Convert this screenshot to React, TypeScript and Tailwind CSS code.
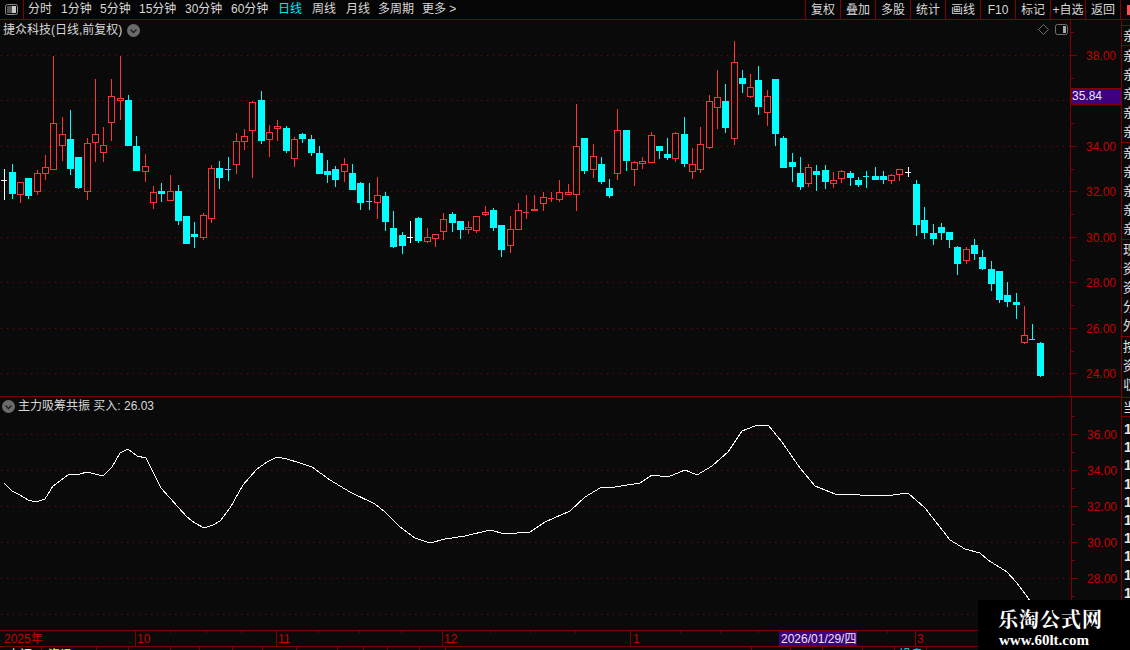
import React from 'react'

type Candle = [number, number, number, number, number, 'r' | 'c' | 'w']

// x, high, body top, body bottom, low, kind
const candles: Candle[] = [
  [4, 169, 180, 180, 200, 'w'], [12, 164, 172, 194, 199, 'c'], [20, 182, 182, 195, 203, 'r'], [28, 178, 178, 196, 199, 'c'],
  [37, 170, 173, 192, 195, 'r'], [45, 155, 167, 174, 180, 'r'], [53, 56, 123, 170, 170, 'r'], [62, 117, 134, 146, 161, 'r'],
  [70, 110, 139, 169, 175, 'c'], [78, 157, 157, 188, 189, 'c'], [87, 138, 143, 192, 200, 'r'], [95, 79, 134, 143, 162, 'r'],
  [103, 127, 145, 153, 162, 'r'], [111, 79, 96, 123, 141, 'r'], [120, 56, 98, 101, 120, 'r'], [128, 95, 100, 146, 146, 'c'],
  [136, 136, 146, 171, 171, 'c'], [145, 154, 166, 172, 182, 'r'], [153, 186, 192, 203, 209, 'r'], [161, 183, 191, 194, 202, 'c'],
  [170, 175, 191, 201, 201, 'r'], [178, 185, 191, 221, 225, 'c'], [186, 216, 216, 244, 244, 'c'], [194, 222, 234, 237, 248, 'c'],
  [203, 213, 215, 238, 240, 'r'], [211, 165, 168, 219, 223, 'r'], [219, 161, 168, 178, 189, 'c'], [228, 157, 169, 169, 181, 'c'],
  [236, 133, 141, 165, 174, 'r'], [244, 129, 136, 142, 150, 'r'], [252, 101, 102, 131, 178, 'r'], [261, 91, 100, 141, 144, 'c'],
  [269, 125, 132, 140, 157, 'r'], [277, 120, 126, 129, 141, 'r'], [286, 126, 128, 151, 153, 'c'], [294, 137, 139, 159, 167, 'r'],
  [302, 133, 134, 139, 143, 'c'], [311, 135, 139, 153, 156, 'c'], [319, 146, 153, 174, 174, 'c'], [327, 160, 171, 175, 183, 'c'],
  [335, 166, 169, 180, 187, 'c'], [344, 158, 164, 172, 182, 'r'], [352, 164, 173, 190, 190, 'c'], [360, 182, 183, 203, 210, 'c'],
  [369, 183, 201, 201, 210, 'c'], [377, 177, 195, 203, 219, 'r'], [385, 192, 196, 222, 231, 'c'], [393, 211, 228, 247, 248, 'c'],
  [402, 232, 235, 246, 254, 'c'], [410, 221, 237, 237, 243, 'w'], [418, 217, 218, 241, 243, 'c'], [427, 228, 237, 242, 243, 'r'],
  [435, 234, 234, 239, 247, 'r'], [443, 213, 219, 232, 240, 'r'], [452, 212, 214, 223, 232, 'c'], [460, 221, 221, 230, 239, 'c'],
  [468, 221, 227, 230, 234, 'r'], [476, 216, 216, 231, 233, 'r'], [485, 206, 212, 215, 216, 'r'], [493, 208, 210, 228, 231, 'c'],
  [501, 225, 225, 250, 257, 'c'], [510, 216, 229, 246, 253, 'r'], [518, 203, 210, 230, 230, 'r'], [526, 195, 212, 212, 219, 'r'],
  [534, 195, 209, 211, 211, 'r'], [543, 192, 197, 204, 211, 'r'], [551, 192, 198, 198, 202, 'r'], [559, 180, 192, 200, 202, 'r'],
  [568, 184, 192, 195, 195, 'r'], [576, 104, 146, 195, 211, 'r'], [584, 138, 138, 171, 174, 'c'], [593, 144, 156, 170, 178, 'r'],
  [601, 157, 164, 182, 184, 'c'], [609, 179, 188, 196, 198, 'c'], [617, 109, 130, 174, 180, 'r'], [626, 130, 130, 161, 171, 'c'],
  [634, 161, 162, 170, 186, 'r'], [642, 157, 161, 164, 169, 'r'], [651, 132, 135, 163, 163, 'r'], [659, 146, 146, 151, 159, 'c'],
  [667, 138, 154, 158, 160, 'c'], [675, 132, 133, 159, 162, 'r'], [684, 117, 134, 164, 167, 'c'], [692, 148, 164, 172, 179, 'r'],
  [700, 127, 144, 170, 173, 'r'], [709, 95, 101, 148, 149, 'r'], [717, 70, 97, 108, 129, 'r'], [725, 84, 101, 128, 133, 'c'],
  [734, 41, 62, 139, 145, 'r'], [742, 70, 78, 84, 93, 'c'], [750, 74, 87, 97, 98, 'r'], [758, 66, 80, 107, 115, 'c'],
  [767, 90, 96, 113, 126, 'r'], [775, 79, 79, 134, 146, 'c'], [783, 136, 138, 168, 168, 'c'], [792, 153, 162, 167, 182, 'c'],
  [800, 157, 173, 187, 190, 'c'], [808, 164, 167, 184, 187, 'r'], [816, 165, 171, 175, 191, 'c'], [825, 165, 170, 182, 189, 'c'],
  [833, 172, 180, 184, 188, 'r'], [841, 170, 171, 179, 183, 'r'], [850, 171, 173, 178, 186, 'c'], [858, 177, 180, 185, 187, 'c'],
  [866, 171, 176, 176, 188, 'c'], [875, 167, 176, 180, 180, 'c'], [883, 171, 176, 180, 184, 'c'], [891, 174, 175, 181, 184, 'r'],
  [899, 169, 169, 175, 181, 'r'], [908, 167, 172, 172, 177, 'w'], [916, 180, 184, 225, 236, 'c'], [924, 207, 220, 233, 239, 'c'],
  [933, 224, 233, 239, 245, 'c'], [941, 223, 227, 233, 240, 'c'], [949, 232, 232, 240, 248, 'c'], [957, 246, 247, 264, 275, 'c'],
  [966, 247, 249, 261, 264, 'r'], [974, 239, 245, 254, 260, 'c'], [982, 250, 257, 269, 270, 'c'], [991, 261, 269, 284, 291, 'c'],
  [999, 271, 271, 300, 303, 'c'], [1007, 282, 295, 302, 307, 'c'], [1016, 293, 302, 305, 319, 'c'], [1024, 306, 335, 343, 344, 'r'],
  [1032, 324, 339, 339, 340, 'c'], [1040, 342, 343, 376, 377, 'c'],
]

const linePoints = [
  [4, 483], [12, 491], [20, 495], [28, 500], [36, 502], [45, 499], [53, 486], [60, 481], [68, 475], [80, 474], [87, 472], [95, 474],
  [103, 476], [112, 467], [120, 453], [128, 449], [137, 456], [146, 458], [161, 488], [178, 507], [187, 517], [195, 523], [204, 528],
  [213, 525], [220, 521], [230, 508], [243, 485], [257, 469], [267, 462], [277, 457], [287, 459], [300, 463], [312, 467], [330, 480],
  [350, 492], [375, 504], [385, 512], [400, 527], [415, 538], [430, 543], [445, 539], [465, 536], [490, 530], [505, 534], [530, 532],
  [545, 522], [570, 511], [585, 497], [600, 488], [615, 487], [640, 483], [652, 475], [668, 477], [685, 470], [697, 475], [712, 466],
  [728, 452], [742, 431], [755, 426], [768, 425], [782, 442], [800, 468], [815, 486], [835, 494], [860, 495], [885, 496], [908, 493],
  [925, 508], [950, 540], [965, 549], [980, 553], [988, 560], [1007, 572], [1017, 583], [1028, 598], [1040, 616],
]

const leftTabs = [
  { label: '分时', cls: 'w-[33px]' },
  { label: '1分钟', cls: 'w-[39px]' },
  { label: '5分钟', cls: 'w-[39px]' },
  { label: '15分钟', cls: 'w-[46px]' },
  { label: '30分钟', cls: 'w-[46px]' },
  { label: '60分钟', cls: 'w-[47px]' },
  { label: '日线', cls: 'w-[34px] text-[#00e6ff]' },
  { label: '周线', cls: 'w-[34px]' },
  { label: '月线', cls: 'w-[32px]' },
  { label: '多周期', cls: 'w-[44px]' },
  { label: '更多 >', cls: 'w-[44px]' },
]

const rightTabs = ['复权', '叠加', '多股', '统计', '画线', 'F10', '标记', '+自选', '返回']

const upperGrid = [55, 100, 146, 191, 237, 282, 328, 373]
const upperLabels = [[55, '38.00'], [146, '34.00'], [191, '32.00'], [237, '30.00'], [282, '28.00'], [328, '26.00'], [373, '24.00']] as const
const upperMinor = [32, 78, 123, 169, 214, 260, 305, 351]
const lowerGrid = [434, 470, 506, 542, 578, 614]
const lowerLabels = [[434, '36.00'], [470, '34.00'], [506, '32.00'], [542, '30.00'], [578, '28.00']] as const
const lowerMinor = [416, 452, 488, 524, 560, 596]

const sideGroups = [
  { chars: ['亲'], cls: 'h-[20px]' },
  { chars: ['亲', '亲', '亲', '亲', '亲'], cls: 'h-[97px]' },
  { chars: ['亲', '亲', '亲', '亲', '亲'], cls: 'h-[97px]' },
  { chars: ['现', '资', '资', '分', '外'], cls: 'h-[97px]' },
  { chars: ['按', '资', '収'], cls: 'h-[61px]' },
  { chars: ['当'], cls: 'h-[19px]' },
]

const bottomCells = [
  { w: 'w-[42px]', text: '上证', color: 'text-white', pl: 'pl-[8px]' },
  { w: 'w-[55px]', text: '资讯', color: 'text-[#ffff00]', pl: 'pl-[6px]' },
  { w: 'w-[32px]', text: '', color: 'text-white', pl: 'pl-[8px]' },
  { w: 'w-[42px]', text: '', color: 'text-white', pl: 'pl-0' },
  { w: 'w-[29px]', text: '', color: 'text-white', pl: 'pl-0' },
  { w: 'w-[33px]', text: '', color: 'text-white', pl: 'pl-0' },
  { w: 'w-[30px]', text: '', color: 'text-white', pl: 'pl-0' },
  { w: 'w-[34px]', text: '', color: 'text-white', pl: 'pl-0' },
  { w: 'w-[41px]', text: '', color: 'text-white', pl: 'pl-0' },
  { w: 'w-[26px]', text: '', color: 'text-white', pl: 'pl-0' },
  { w: 'w-[24px]', text: '', color: 'text-white', pl: 'pl-0' },
  { w: 'w-[32px]', text: '', color: 'text-white', pl: 'pl-0' },
  { w: 'w-[26px]', text: '', color: 'text-white', pl: 'pl-0' },
  { w: 'w-[306px]', text: '', color: 'text-white', pl: 'pl-0' },
  { w: 'w-[39px]', text: '', color: 'text-white', pl: 'pl-0' },
  { w: 'w-[32px]', text: '', color: 'text-white', pl: 'pl-0' },
  { w: 'w-[40px]', text: '', color: 'text-white', pl: 'pl-0' },
  { w: 'w-[32px]', text: '', color: 'text-white', pl: 'pl-0' },
  { w: 'w-[32px]', text: '操盘', color: 'text-[#00e6ff]', pl: 'pl-[4px]' },
]

function PanelIcon({ dark }: { dark?: boolean }) {
  return (
    <svg width="13" height="11" viewBox="0 0 13 11" shapeRendering="crispEdges">
      <rect x="0.5" y="0.5" width="12" height="10" rx="2" fill="none" stroke={dark ? '#707070' : '#8c8c8c'} shapeRendering="auto" />
      {dark ? (
        <rect x="8" y="2" width="3" height="7" fill="#a8a8a8" />
      ) : (
        <>
          <rect x="2" y="2" width="5" height="7" fill="#555555" />
          <rect x="7" y="2" width="4" height="7" fill="#c8c8c8" />
        </>
      )}
    </svg>
  )
}

function ChevronCircle() {
  return (
    <svg width="13" height="13" viewBox="0 0 13 13">
      <circle cx="6.5" cy="6.5" r="6.5" fill="#6b6b6b" />
      <path d="M3.5 5.5 L6.5 8.5 L9.5 5.5" fill="none" stroke="#1c1c1c" strokeWidth="1.3" />
    </svg>
  )
}

function Candles() {
  return (
    <g shapeRendering="crispEdges">
      {candles.map(([x, high, top, bottom, low, kind], i) => {
        const color = kind === 'r' ? '#ff3333' : kind === 'c' ? '#00ffff' : '#ffffff'
        const wick = <line x1={x + 0.5} x2={x + 0.5} y1={high} y2={low} stroke={color} />
        if (top === bottom) {
          return (
            <g key={i}>
              {wick}
              <line x1={x - 3} x2={x + 3} y1={top + 0.5} y2={top + 0.5} stroke={color} />
            </g>
          )
        }
        if (kind === 'c' || bottom - top < 3) {
          return (
            <g key={i}>
              {wick}
              <rect x={x - 3} y={top} width={7} height={bottom - top} fill={color} />
            </g>
          )
        }
        return (
          <g key={i}>
            {wick}
            <rect x={x - 2.5} y={top + 0.5} width={6} height={bottom - top - 1} fill="#0a0a0a" stroke={color} />
          </g>
        )
      })}
    </g>
  )
}

function Dots({ ys }: { ys: number[] }) {
  return (
    <g shapeRendering="crispEdges">
      {ys.map((y) => (
        <line key={y} x1="1" x2="1070" y1={y + 0.5} y2={y + 0.5} stroke="#8b0000" strokeDasharray="1 5" />
      ))}
    </g>
  )
}

function Axis({
  top,
  height,
  labels,
  minor,
  children,
}: {
  top: number
  height: number
  labels: readonly (readonly [number, string])[]
  minor: number[]
  children?: React.ReactNode
}) {
  return (
    <svg width="50" height={height} viewBox={`1071 ${top} 50 ${height}`} className="block shrink-0">
      <g shapeRendering="crispEdges" stroke="#800000">
        {labels.map(([y]) => (
          <line key={y} x1="1071" x2="1077" y1={y + 0.5} y2={y + 0.5} />
        ))}
        {minor.map((y) => (
          <line key={y} x1="1071" x2="1074" y1={y + 0.5} y2={y + 0.5} />
        ))}
      </g>
      {labels.map(([y, text]) => (
        <text key={y} x="1116" y={y + 5} textAnchor="end" fontSize="12" fill="#c80000">
          {text}
        </text>
      ))}
      {children}
    </svg>
  )
}

export default function App() {
  const linePath = linePoints.map((p) => p.join(',')).join(' ')

  return (
    <div
      className="relative w-[1130px] h-[650px] overflow-hidden flex flex-col bg-[#0a0a0a] text-[12px] text-[#d8d8d8]"
      style={{ fontFamily: '"Liberation Sans", "Noto Sans CJK SC", sans-serif' }}
    >
      {/* 顶部工具栏 */}
      <div className="h-[20px] shrink-0 flex items-center border-b border-[#800000] bg-[#050505]">
        <div className="w-[24px] h-full flex items-center justify-center border-r border-[#800000] pr-[1px]">
          <PanelIcon />
        </div>
        <div className="flex items-center pl-[4px]">
          {leftTabs.map((t) => (
            <span key={t.label} className={`${t.cls} leading-[19px] whitespace-nowrap`}>
              {t.label}
            </span>
          ))}
        </div>
        <div className="ml-auto flex h-full">
          {rightTabs.map((t) => (
            <div key={t} className="w-[35px] h-full flex items-center justify-center border-l border-[#800000] whitespace-nowrap">
              {t}
            </div>
          ))}
          <div className="w-[10px] h-full border-l border-[#800000] flex items-center justify-end">
            <div className="w-[3px] h-[10px] bg-[#ff5050]" />
          </div>
        </div>
      </div>

      <div className="flex flex-1 min-h-0">
        <div className="w-[1121px] flex flex-col">
          {/* K线 */}
          <div className="h-[377px] shrink-0 flex border-b border-[#800000]">
            <div className="relative w-[1071px] h-full border-r border-[#800000]">
              <svg width="1070" height="376" viewBox="0 20 1070 376" className="block">
                <Dots ys={upperGrid} />
                <Candles />
              </svg>
              <div className="absolute left-[3px] top-[2px] flex items-center gap-[5px]">
                <span className="leading-[16px]">捷众科技(日线,前复权)</span>
                <ChevronCircle />
              </div>
              <div className="absolute right-[2px] top-[4px] flex items-center gap-[6px]">
                <svg width="11" height="11" viewBox="0 0 11 11">
                  <path d="M5.5 0.5 L10.5 5.5 L5.5 10.5 L0.5 5.5 Z" fill="none" stroke="#6e6e6e" />
                </svg>
                <PanelIcon dark />
              </div>
            </div>
            <Axis top={20} height={376} labels={upperLabels} minor={upperMinor}>
              <rect x="1071" y="88.5" width="50" height="16" fill="#3f0080" stroke="#800000" shapeRendering="crispEdges" />
              <text x="1072" y="100" fontSize="12" fill="#e8e8e8">35.84</text>
            </Axis>
          </div>

          {/* 副图 */}
          <div className="h-[233px] shrink-0 flex">
            <div className="relative w-[1072px] h-full border-r border-[#800000]">
              <svg width="1071" height="233" viewBox="0 397 1071 233" className="block">
                <Dots ys={lowerGrid} />
                <polyline points={linePath} fill="none" stroke="#ffffff" strokeWidth="1" shapeRendering="crispEdges" />
              </svg>
              <div className="absolute left-[2px] top-[1px] flex items-center gap-[3px]">
                <ChevronCircle />
                <span className="leading-[16px]">主力吸筹共振 买入: 26.03</span>
              </div>
            </div>
            <Axis top={397} height={233} labels={lowerLabels} minor={lowerMinor} />
          </div>

          {/* 时间轴 */}
          <svg width="1121" height="16" viewBox="0 630 1121 16" className="block shrink-0">
            <g stroke="#800000" shapeRendering="crispEdges">
              <line x1="0" x2="1121" y1="630.5" y2="630.5" />
              {[135, 276, 442, 630, 915].map((x) => (
                <line key={x} x1={x + 0.5} x2={x + 0.5} y1="630" y2="646" />
              ))}
              {[170, 206, 241, 318, 359, 401, 490, 530, 575, 680, 720, 758, 887].map((x) => (
                <line key={x} x1={x + 0.5} x2={x + 0.5} y1="630" y2="633" />
              ))}
            </g>
            <g fontSize="12" fill="#c80000">
              <text x="4" y="643">2025年</text>
              <text x="137" y="643">10</text>
              <text x="278" y="643">11</text>
              <text x="444" y="643">12</text>
              <text x="633" y="643">1</text>
              <text x="917" y="643">3</text>
            </g>
            <rect x="779" y="631" width="78" height="15" fill="#3f0080" />
            <text x="781" y="643" fontSize="12" fill="#e8e8e8">2026/01/29/四</text>
          </svg>

          {/* 底部状态栏, 只露出一点 */}
          <div className="h-[4px] shrink-0 flex border-t border-[#800000] overflow-hidden">
            {bottomCells.map((c, i) => (
              <div key={i} className={`${c.w} ${c.color} ${c.pl} shrink-0 h-full border-r border-[#800000] leading-[16px] whitespace-nowrap`}>
                {c.text}
              </div>
            ))}
          </div>
        </div>

        {/* 右侧窄栏, 被窗口裁掉一半 */}
        <div className="w-[9px] flex flex-col border-l border-[#800000] overflow-hidden text-[#e0e0e0] text-[13px]">
          <div className="h-[6px] shrink-0 border-b border-[#800000]" />
          {sideGroups.map((g, i) => (
            <div key={i} className={`${g.cls} shrink-0 border-b border-[#800000] overflow-hidden pl-[1px]`}>
              {g.chars.map((c, j) => (
                <div key={j} className="h-[19px] leading-[19px]">{c}</div>
              ))}
            </div>
          ))}
          <div className="pl-[2px] pt-[3px] text-[14px] font-bold leading-[18.2px] text-[#e8e8e8]">
            {Array.from({ length: 11 }).map((_, i) => (
              <div key={i}>1</div>
            ))}
          </div>
        </div>
      </div>

      {/* 水印 */}
      <div className="absolute right-0 bottom-0 w-[152px] h-[50px] bg-black flex flex-col items-start pl-[20px] pt-[8px] text-white font-bold" style={{ fontFamily: '"Liberation Serif", "Noto Serif CJK SC", "Noto Sans CJK SC", serif' }}>
        <span className="text-[20px] leading-[24px] tracking-[1px]">乐淘公式网</span>
        <span className="text-[15px] leading-[17px] pl-[1px]">www.60lt.com</span>
      </div>
    </div>
  )
}
